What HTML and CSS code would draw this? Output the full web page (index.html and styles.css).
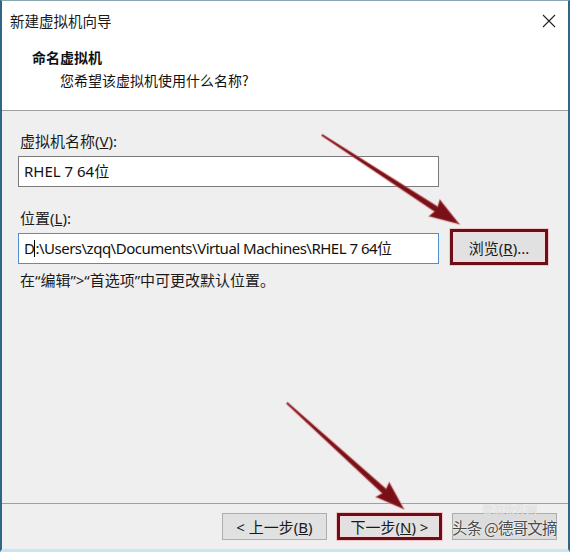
FILE: index.html
```html
<!DOCTYPE html>
<html lang="zh-CN">
<head>
  <meta charset="UTF-8">
  <title>新建虚拟机向导</title>
  <link rel="stylesheet" href="styles.css">
</head>
<body>
  <div class="window">
    <div class="titlebar">
      <span class="title">新建虚拟机向导</span>
      <svg class="close" viewBox="0 0 14 14"><path d="M1 1L13 13M13 1L1 13" stroke="#222" stroke-width="1.1" fill="none"/></svg>
    </div>
    <div class="header">
      <h1>命名虚拟机</h1>
      <p class="subtitle">您希望该虚拟机使用什么名称?</p>
    </div>
    <div class="content">
      <label class="label">虚拟机名称(<u>V</u>):</label>
      <div class="field name-field">RHEL 7 64位</div>
      <label class="label second">位置(<u>L</u>):</label>
      <div class="row">
        <div class="field path-field focused">D<span class="caret"></span>:\Users\zqq\Documents\Virtual Machines\RHEL 7 64位</div>
        <button class="btn browse marked">浏览(<u>R</u>)...</button>
      </div>
      <p class="hint">在“编辑”&gt;“首选项”中可更改默认位置。</p>
    </div>
    <div class="footer">
      <button class="btn">&lt; 上一步(<u>B</u>)</button>
      <button class="btn marked">下一步(<u>N</u>) &gt;</button>
      <button class="btn cancel"></button>
    </div>

    <!-- annotation arrows from the tutorial -->
    <svg class="arrows" viewBox="0 0 570 552">
      <g transform="translate(322 135) rotate(33)">
        <polygon points="0,-0.9 136,-3 134,-10 164,0 134,10 136,3 0,0.9" fill="#7a1017" stroke="rgba(210,120,120,0.35)" stroke-width="2" stroke-linejoin="round"/>
      </g>
      <g transform="translate(287 403) rotate(42.2)">
        <polygon points="0,-0.9 131,-3 129,-10 158,0 129,10 131,3 0,0.9" fill="#7a1017" stroke="rgba(210,120,120,0.35)" stroke-width="2" stroke-linejoin="round"/>
      </g>
    </svg>
    <div class="watermark">
      <span class="wm-faint">资深软件网</span>
      <span class="wm-main">头条 @德哥文摘</span>
    </div>
  </div>
</body>
</html>
```

FILE: styles.css
```css
* {
  box-sizing: border-box;
}
body {
  margin: 0;
  font-family: "Segoe UI", "Noto Sans", "Noto Sans CJK SC", sans-serif;
  color: #111;
  background: #fff;
}
.window {
  position: relative;
  width: 570px;
  height: 552px;
  display: flex;
  flex-direction: column;
  border-left: 2px solid #2e6783;
  border-right: 2px solid #2e6783;
  border-top: 1px solid #8aa6b4;
  border-bottom: 3px solid #c9e4f4;
  background: #f0eff0;
  overflow: hidden;
}
.titlebar {
  height: 39px;
  display: flex;
  align-items: center;
  justify-content: space-between;
  padding: 0 12px 0 8px;
  background: #fff;
}
.title {
  font-size: 14.5px;
  color: #1a1a1a;
  font-family: "Noto Sans CJK SC", sans-serif;
}
.close {
  width: 14px;
  height: 14px;
}
.header {
  height: 71px;
  background: #fff;
  padding: 7px 0 0 30px;
  border-bottom: 1px solid #a0a0a0;
}
.header h1 {
  margin: 0;
  font-size: 14px;
  font-weight: 700;
  line-height: 20px;
  font-family: "Noto Sans CJK SC", sans-serif;
}
.subtitle {
  margin: 3px 0 0 28px;
  font-size: 14px;
  line-height: 20px;
  font-family: "Noto Sans CJK SC", sans-serif;
}
.content {
  flex: 1;
  padding: 20px 0 0 16px;
}
.label {
  display: block;
  font-size: 15px;
  line-height: 20px;
  margin-left: 2px;
  color: #1a1a1a;
}
.label.second {
  margin-top: 21px;
}
.field {
  height: 31px;
  width: 421px;
  margin-top: 5px;
  background: #fff;
  border: 1px solid #7a7a7a;
  padding: 0 5px;
  font-size: 15px;
  line-height: 29px;
  white-space: nowrap;
  overflow: hidden;
}
.field.focused {
  border-color: #4e8fcf;
}
.path-field {
  letter-spacing: -0.5px;
}
.caret {
  display: inline-block;
  width: 1px;
  height: 17px;
  background: #000;
  vertical-align: -3px;
}
.row {
  display: flex;
  align-items: center;
  gap: 11px;
}
.row .field {
  margin-top: 4px;
}
.hint {
  margin: 5px 0 0 2px;
  font-size: 15px;
  line-height: 20px;
  color: #1a1a1a;
}
.footer {
  height: 46px;
  border-top: 1px solid #a0a0a0;
  display: flex;
  justify-content: flex-end;
  align-items: flex-start;
  gap: 10px;
  padding: 9px 11px 0 0;
}
.btn {
  width: 105px;
  height: 27px;
  background: #e1e1e1;
  border: 1px solid #adadad;
  font-family: inherit;
  font-size: 15px;
  color: #1a1a1a;
  padding: 0;
}
.btn.marked {
  border: 3px solid #6a0f18;
  box-shadow: inset 0 0 0 2px #f3d9db, 0 0 0 1px #f0c8cc;
}
.browse {
  width: 98px;
  height: 36px;
  margin-top: 1px;
}
.cancel {
  background: #dcdcdc;
}
.arrows {
  position: absolute;
  left: -2px;
  top: -1px;
  width: 570px;
  height: 552px;
  pointer-events: none;
}
.watermark {
  position: absolute;
  left: 450px;
  top: 503px;
  display: flex;
  flex-direction: column;
  font-family: "Noto Sans CJK SC", sans-serif;
  line-height: 1;
}
.wm-faint {
  margin-left: 30px;
  font-size: 11px;
  height: 11px;
  color: rgba(255, 255, 255, 0.8);
  text-shadow: 0 0 1px #aaa;
}
.wm-main {
  margin-top: 5px;
  font-size: 15.5px;
  color: #4a4a4a;
  text-shadow: 0 0 1px #fff, 0 0 2px #fff;
  letter-spacing: -0.8px;
}
```
